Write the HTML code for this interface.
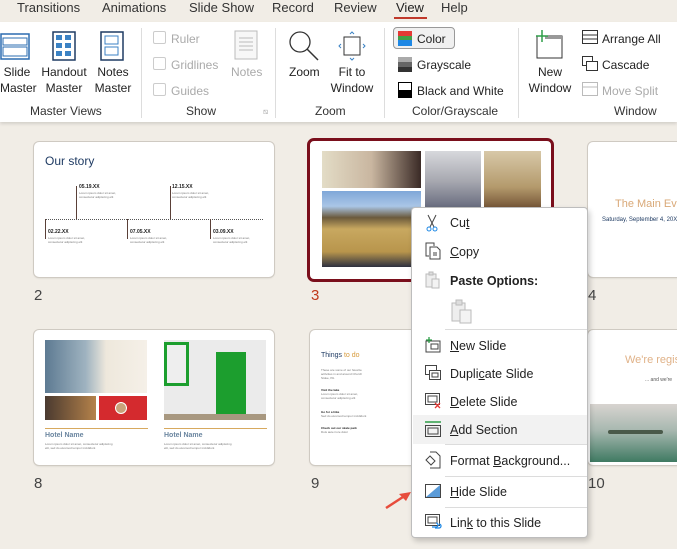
<!DOCTYPE html>
<html><head><meta charset="utf-8"><style>
*{margin:0;padding:0;box-sizing:border-box}
body{width:677px;height:549px;overflow:hidden;background:#f1ede6;font-family:"Liberation Sans",sans-serif;position:relative;color:#222}
.a{position:absolute}
.tab{top:0;font-size:13px;color:#333;}
.rib{top:22px;left:0;width:677px;height:100px;background:#fff;box-shadow:0 2px 3px rgba(0,0,0,.12)}
.gl{font-size:12px;color:#333;top:104px}
.sep{top:28px;width:1px;height:90px;background:#ddd}
.lbl{font-size:12px;color:#222;text-align:center;line-height:16px}
.dis{color:#aaa}
.slide{background:#fff;border-radius:5px;box-shadow:0 0 0 1px #cfcac2,0 1px 2px rgba(0,0,0,.15);overflow:hidden}
.num{font-size:15px;color:#444}
.menu{left:411px;top:207px;width:177px;height:331px;background:#fff;border:1px solid #bdbdbd;border-radius:4px;box-shadow:2px 3px 6px rgba(0,0,0,.2)}
.mi{position:absolute;left:38px;font-size:12.5px;color:#222}
.ms{position:absolute;left:33px;right:0;height:1px;background:#dcdcdc}
u{text-decoration:underline}
.ic{position:absolute;left:13px}
.tiny{font-size:3px;color:#777;line-height:4px}
</style></head><body>
<div class="a tab" style="left:17px">Transitions</div>
<div class="a tab" style="left:102px">Animations</div>
<div class="a tab" style="left:189px">Slide Show</div>
<div class="a tab" style="left:272px">Record</div>
<div class="a tab" style="left:334px">Review</div>
<div class="a tab" style="left:396px;color:#222">View</div>
<div class="a" style="left:394px;top:17px;width:33px;height:2px;background:#c0392b"></div>
<div class="a tab" style="left:441px">Help</div>
<div class="a rib"></div>
<svg class="a" style="left:0;top:33px" width="30" height="28"><rect x="1" y="1" width="28" height="25" fill="#fff" stroke="#2b6cb0" stroke-width="1.5"/><rect x="3" y="5" width="24" height="7" fill="none" stroke="#2b6cb0"/><rect x="3" y="14" width="24" height="9" fill="none" stroke="#2b6cb0"/></svg>
<div class="a lbl" style="left:0;top:64px;width:34px">Slide<br>Master</div>
<svg class="a" style="left:52px;top:31px" width="26" height="32"><rect x="1" y="1" width="22" height="28" fill="#fff" stroke="#1f3b63" stroke-width="1.5"/><g fill="#3b82c4"><rect x="4" y="4" width="6" height="5"/><rect x="13" y="4" width="6" height="5"/><rect x="4" y="12" width="6" height="5"/><rect x="13" y="12" width="6" height="5"/><rect x="4" y="20" width="6" height="5"/><rect x="13" y="20" width="6" height="5"/></g></svg>
<div class="a lbl" style="left:36px;top:64px;width:56px">Handout<br>Master</div>
<svg class="a" style="left:100px;top:31px" width="26" height="32"><rect x="1" y="1" width="22" height="28" fill="#fff" stroke="#1f3b63" stroke-width="1.5"/><rect x="5" y="5" width="13" height="8" fill="none" stroke="#3b82c4"/><rect x="5" y="16" width="13" height="8" fill="none" stroke="#3b82c4"/></svg>
<div class="a lbl" style="left:92px;top:64px;width:42px">Notes<br>Master</div>
<div class="a gl" style="left:30px">Master Views</div>
<div class="a sep" style="left:141px"></div>
<div class="a" style="left:153px;top:31px;width:13px;height:13px;border:1px solid #ccc;border-radius:2px"></div>
<div class="a lbl dis" style="left:171px;top:31px">Ruler</div>
<div class="a" style="left:153px;top:57px;width:13px;height:13px;border:1px solid #ccc;border-radius:2px"></div>
<div class="a lbl dis" style="left:171px;top:57px">Gridlines</div>
<div class="a" style="left:153px;top:83px;width:13px;height:13px;border:1px solid #ccc;border-radius:2px"></div>
<div class="a lbl dis" style="left:171px;top:83px">Guides</div>
<svg class="a" style="left:234px;top:30px" width="26" height="32"><rect x="1" y="1" width="22" height="28" fill="#f7f7f7" stroke="#bbb"/><g stroke="#bbb"><line x1="5" y1="8" x2="19" y2="8"/><line x1="5" y1="12" x2="19" y2="12"/><line x1="5" y1="16" x2="19" y2="16"/><line x1="5" y1="20" x2="19" y2="20"/></g></svg>
<div class="a lbl dis" style="left:231px;top:64px">Notes</div>
<div class="a gl" style="left:186px">Show</div>
<div class="a" style="left:263px;top:107px;font-size:8px;color:#aaa">⧅</div>
<div class="a sep" style="left:275px"></div>
<svg class="a" style="left:287px;top:29px" width="34" height="34"><circle cx="13" cy="13" r="10" fill="none" stroke="#333" stroke-width="1.3"/><line x1="20" y1="20" x2="31" y2="31" stroke="#333" stroke-width="1.5"/></svg>
<div class="a lbl" style="left:289px;top:64px">Zoom</div>
<svg class="a" style="left:336px;top:31px" width="32" height="30"><rect x="8" y="6" width="16" height="18" fill="#fff" stroke="#333"/><g fill="none" stroke="#3b82c4"><path d="M14 3l2-2 2 2M14 27l2 2 2-2M5 13l-2 2 2 2M27 13l2 2-2 2"/></g></svg>
<div class="a lbl" style="left:330px;top:64px;width:44px">Fit to<br>Window</div>
<div class="a gl" style="left:315px">Zoom</div>
<div class="a sep" style="left:384px"></div>
<div class="a" style="left:393px;top:27px;width:62px;height:22px;border:1px solid #999;border-radius:4px;background:#f0f0f0"></div>
<svg class="a" style="left:398px;top:31px" width="14" height="15"><rect y="0" width="14" height="5" fill="#e53935"/><rect y="5" width="14" height="4" fill="#43a047"/><rect y="9" width="14" height="6" fill="#1e88e5"/></svg>
<div class="a lbl" style="left:417px;top:31px">Color</div>
<svg class="a" style="left:398px;top:57px" width="14" height="15"><rect width="14" height="5" fill="#aaa"/><rect y="5" width="14" height="5" fill="#666"/><rect y="10" width="14" height="5" fill="#333"/></svg>
<div class="a lbl" style="left:417px;top:57px">Grayscale</div>
<svg class="a" style="left:398px;top:82px" width="14" height="16"><rect x=".5" y=".5" width="13" height="15" fill="#fff" stroke="#000"/><rect y="8" width="14" height="8" fill="#000"/></svg>
<div class="a lbl" style="left:417px;top:83px">Black and White</div>
<div class="a gl" style="left:412px">Color/Grayscale</div>
<div class="a sep" style="left:518px"></div>
<svg class="a" style="left:533px;top:30px" width="34" height="32"><rect x="4" y="6" width="25" height="22" fill="#fff" stroke="#333"/><rect x="12" y="6" width="17" height="3" fill="#999"/><path d="M9 0v12M3 6h12" stroke="#2e9e48" stroke-width="1.5"/></svg>
<div class="a lbl" style="left:526px;top:64px;width:48px">New<br>Window</div>
<svg class="a" style="left:582px;top:30px" width="16" height="14"><rect x=".5" y=".5" width="15" height="13" fill="#fff" stroke="#333"/><line x1="0" y1="5" x2="16" y2="5" stroke="#333"/><line x1="0" y1="9" x2="16" y2="9" stroke="#333"/></svg>
<div class="a lbl" style="left:602px;top:31px">Arrange All</div>
<svg class="a" style="left:582px;top:56px" width="16" height="15"><rect x=".5" y=".5" width="10" height="9" fill="#fff" stroke="#333"/><rect x="4.5" y="5.5" width="11" height="9" fill="#fff" stroke="#333"/></svg>
<div class="a lbl" style="left:602px;top:57px">Cascade</div>
<svg class="a" style="left:582px;top:82px" width="16" height="15"><rect x=".5" y=".5" width="15" height="13" fill="none" stroke="#bbb"/><line x1="0" y1="5" x2="16" y2="5" stroke="#bbb"/></svg>
<div class="a lbl dis" style="left:602px;top:83px">Move Split</div>
<div class="a gl" style="left:614px">Window</div>

<div class="a slide" style="left:34px;top:142px;width:240px;height:135px">
 <div class="a" style="left:11px;top:12px;font-size:12px;color:#1f3b63;font-family:'Liberation Sans Narrow','Liberation Sans',sans-serif">Our story</div>
 <div class="a" style="left:11px;top:77px;width:218px;border-top:1px dotted #555"></div>
 <div class="a" style="left:11px;top:77px;width:1px;height:20px;background:#5a4038"></div>
 <div class="a" style="left:42px;top:44px;width:1px;height:33px;background:#5a4038"></div>
 <div class="a" style="left:93px;top:77px;width:1px;height:20px;background:#5a4038"></div>
 <div class="a" style="left:136px;top:44px;width:1px;height:33px;background:#5a4038"></div>
 <div class="a" style="left:176px;top:77px;width:1px;height:20px;background:#5a4038"></div>
 <div class="a" style="left:45px;top:42px;font-size:5px;font-weight:bold">05.19.XX</div><div class="a tiny" style="left:45px;top:49px">Lorem ipsum dolor sit amet,<br>consectetur adipiscing elit</div>
 <div class="a" style="left:138px;top:42px;font-size:5px;font-weight:bold">12.15.XX</div><div class="a tiny" style="left:138px;top:49px">Lorem ipsum dolor sit amet,<br>consectetur adipiscing elit</div>
 <div class="a" style="left:14px;top:87px;font-size:5px;font-weight:bold">02.22.XX</div><div class="a tiny" style="left:14px;top:94px">Lorem ipsum dolor sit amet,<br>consectetur adipiscing elit</div>
 <div class="a" style="left:96px;top:87px;font-size:5px;font-weight:bold">07.05.XX</div><div class="a tiny" style="left:96px;top:94px">Lorem ipsum dolor sit amet,<br>consectetur adipiscing elit</div>
 <div class="a" style="left:179px;top:87px;font-size:5px;font-weight:bold">03.09.XX</div><div class="a tiny" style="left:179px;top:94px">Lorem ipsum dolor sit amet,<br>consectetur adipiscing elit</div>
</div>
<div class="a num" style="left:34px;top:287px">2</div>
<div class="a" style="left:307px;top:138px;width:247px;height:144px;border:3px solid #7a0f1c;border-radius:7px;background:#fff">
 <div class="a" style="left:12px;top:10px;width:99px;height:37px;background:linear-gradient(90deg,#e3dcc6,#c9b6a0 50%,#3a2a26)"></div>
 <div class="a" style="left:12px;top:50px;width:99px;height:76px;background:linear-gradient(180deg,#7fa7d8 0,#aac6e6 20%,#6b5a3c 35%,#c8a860 50%,#b8954c 80%,#2d3040)"></div>
 <div class="a" style="left:115px;top:10px;width:56px;height:60px;background:linear-gradient(180deg,#d7d8dc,#a7a8b0 50%,#606478)"></div>
 <div class="a" style="left:174px;top:10px;width:57px;height:60px;background:linear-gradient(180deg,#d8c8a8,#b49a6c 60%,#6a4a2e)"></div>
</div>
<div class="a num" style="left:311px;top:287px;color:#c0391b">3</div>
<div class="a slide" style="left:588px;top:142px;width:100px;height:135px">
 <div class="a" style="left:27px;top:56px;font-size:11px;color:#d9a877;white-space:nowrap">The Main Event</div>
 <div class="a" style="left:14px;top:75px;font-size:6px;color:#1f3b63;white-space:nowrap">Saturday, September 4, 20XX at</div>
</div>
<div class="a num" style="left:588px;top:287px">4</div>
<div class="a slide" style="left:34px;top:330px;width:240px;height:135px">
 <div class="a" style="left:11px;top:10px;width:102px;height:53px;background:linear-gradient(90deg,#5d7a92,#9fb3c0 40%,#eee8dc 60%,#f5f0e8)"></div>
 <div class="a" style="left:11px;top:66px;width:51px;height:24px;background:linear-gradient(90deg,#4a3a30,#b5824a)"></div>
 <div class="a" style="left:65px;top:66px;width:48px;height:24px;background:#d42a2e"><div class="a" style="left:16px;top:6px;width:12px;height:12px;border-radius:50%;background:#c9a27a;border:1px solid #fff"></div></div>
 <div class="a" style="left:130px;top:10px;width:102px;height:80px;background:#ebebeb"><div class="a" style="left:52px;top:12px;width:30px;height:62px;background:#1c9e2e"></div><div class="a" style="left:0;top:2px;width:25px;height:44px;border:3px solid #1c9e2e;background:#eee"></div><div class="a" style="left:0;top:74px;width:102px;height:6px;background:#a89880"></div></div>
 <div class="a" style="left:11px;top:98px;width:103px;height:1px;background:#d7a95e"></div>
 <div class="a" style="left:130px;top:98px;width:103px;height:1px;background:#d7a95e"></div>
 <div class="a" style="left:11px;top:102px;font-size:7px;font-weight:bold;color:#6b86a0">Hotel Name</div>
 <div class="a" style="left:130px;top:102px;font-size:7px;font-weight:bold;color:#6b86a0">Hotel Name</div>
 <div class="a tiny" style="left:11px;top:112px">Lorem ipsum dolor sit amet, consectetur adipiscing<br>elit, sed do eiusmod tempor incididunt</div>
 <div class="a tiny" style="left:130px;top:112px">Lorem ipsum dolor sit amet, consectetur adipiscing<br>elit, sed do eiusmod tempor incididunt</div>
</div>
<div class="a num" style="left:34px;top:475px">8</div>
<div class="a slide" style="left:310px;top:330px;width:110px;height:135px">
 <div class="a" style="left:11px;top:22px;font-size:7px;color:#1f3b63">Things <span style="color:#d79a3a">to do</span></div>
 <div class="a tiny" style="left:11px;top:38px">These are some of our favorite<br>activities in and around Church<br>Stoke, PA.</div>
 <div class="a tiny" style="left:11px;top:58px"><b style="color:#222">Visit the lake</b><br>Lorem ipsum dolor sit amet,<br>consectetur adipiscing elit</div>
 <div class="a tiny" style="left:11px;top:80px"><b style="color:#222">Go for a hike</b><br>Sed do eiusmod tempor incididunt</div>
 <div class="a tiny" style="left:11px;top:96px"><b style="color:#222">Check out our skate park</b><br>Duis aute irure dolor</div>
</div>
<div class="a num" style="left:311px;top:475px">9</div>
<div class="a slide" style="left:588px;top:330px;width:100px;height:135px">
 <div class="a" style="left:37px;top:24px;font-size:11px;color:#e0b288;white-space:nowrap">We're registered</div>
 <div class="a" style="left:57px;top:47px;font-size:5px;color:#555;white-space:nowrap">... and we're</div>
 <div class="a" style="left:2px;top:74px;width:98px;height:58px;background:linear-gradient(180deg,#d8d4d0,#a8b8b0 45%,#3f7a62)"><div class="a" style="left:18px;top:26px;width:55px;height:4px;background:#4a5a4a;border-radius:2px"></div></div>
</div>
<div class="a num" style="left:588px;top:475px">10</div>

<svg class="a" style="left:384px;top:488px" width="30" height="22"><path d="M2 20L22 7" stroke="#e74c3c" stroke-width="2.5"/><path d="M27 4L15 6 22 13Z" fill="#e74c3c"/></svg>

<div class="a menu">
 <svg class="ic" style="top:6px" width="14" height="18"><path d="M3 1l6 12M11 1L5 13" stroke="#444" fill="none"/><circle cx="4" cy="15" r="2" fill="none" stroke="#1e88e5"/><circle cx="10" cy="15" r="2" fill="none" stroke="#1e88e5"/></svg>
 <div class="mi" style="top:8px">Cu<u>t</u></div>
 <svg class="ic" style="top:34px" width="16" height="18"><path d="M4 14H1V1h8v3" fill="none" stroke="#444"/><path d="M5 5h7l3 3v9H5z" fill="#fff" stroke="#444"/><path d="M8 11h4M8 13h4" stroke="#444"/></svg>
 <div class="mi" style="top:37px"><u>C</u>opy</div>
 <svg class="ic" style="top:63px" width="16" height="18"><rect x="1" y="3" width="10" height="13" fill="#eee" stroke="#bbb"/><rect x="4" y="1" width="4" height="3" fill="#ddd" stroke="#bbb"/><rect x="7" y="8" width="7" height="9" fill="#f3f3f3" stroke="#bbb"/></svg>
 <div class="mi" style="top:66px;font-weight:bold">Paste Options:</div>
 <svg class="a" style="left:39px;top:91px" width="22" height="26"><rect x="1" y="4" width="13" height="18" fill="#eee" stroke="#bbb"/><rect x="5" y="1" width="6" height="5" fill="#ddd" stroke="#bbb"/><rect x="9" y="11" width="11" height="13" fill="#f3f3f3" stroke="#bbb"/></svg>
 <div class="ms" style="top:121px"></div>
 <svg class="ic" style="top:129px" width="16" height="16"><rect x="1" y="4" width="14" height="11" fill="#fff" stroke="#444"/><rect x="6" y="7" width="7" height="5" fill="none" stroke="#444"/><path d="M4 0v6M1 3h6" stroke="#2e9e48" stroke-width="1.3"/></svg>
 <div class="mi" style="top:131px"><u>N</u>ew Slide</div>
 <svg class="ic" style="top:157px" width="16" height="16"><rect x=".5" y=".5" width="11" height="9" fill="#fff" stroke="#444"/><rect x="4.5" y="5.5" width="11" height="9" fill="#fff" stroke="#444"/><rect x="7" y="8" width="6" height="4" fill="none" stroke="#444"/></svg>
 <div class="mi" style="top:159px">Dupli<u>c</u>ate Slide</div>
 <svg class="ic" style="top:185px" width="17" height="16"><rect x=".5" y=".5" width="14" height="11" fill="#fff" stroke="#444"/><rect x="3" y="3" width="9" height="6" fill="none" stroke="#444"/><path d="M10 10l5 5M15 10l-5 5" stroke="#e53935" stroke-width="1.3"/></svg>
 <div class="mi" style="top:187px"><u>D</u>elete Slide</div>
 <div class="a" style="left:1px;top:207px;width:174px;height:29px;background:#f2f2f2"></div>
 <svg class="ic" style="top:213px" width="16" height="16"><line x1="0" y1="1" x2="16" y2="1" stroke="#2e9e48" stroke-width="1.5"/><rect x=".5" y="4.5" width="15" height="11" fill="none" stroke="#444"/><rect x="3" y="7" width="10" height="6" fill="none" stroke="#444"/></svg>
 <div class="mi" style="top:215px"><u>A</u>dd Section</div>
 <div class="ms" style="top:236px"></div>
 <svg class="ic" style="top:243px" width="16" height="18"><path d="M5 1h6l4 4v12H5" fill="none" stroke="#444"/><path d="M1 9l4-4 5 5-4 4z" fill="#fff" stroke="#444"/></svg>
 <div class="mi" style="top:246px">Format <u>B</u>ackground...</div>
 <div class="ms" style="top:268px"></div>
 <svg class="ic" style="top:276px" width="16" height="14"><rect x=".5" y=".5" width="15" height="13" fill="#fff" stroke="#444"/><path d="M15 1L1 13h14z" fill="#5a9bd8"/></svg>
 <div class="mi" style="top:277px"><u>H</u>ide Slide</div>
 <div class="ms" style="top:299px"></div>
 <svg class="ic" style="top:306px" width="17" height="17"><rect x=".5" y=".5" width="14" height="11" fill="#fff" stroke="#444"/><rect x="3" y="3" width="9" height="6" fill="none" stroke="#444"/><path d="M7 13h4a2 2 0 0 0 0-4M10 14h4a2 2 0 0 0 0-4" fill="none" stroke="#1e88e5" stroke-width="1.3"/></svg>
 <div class="mi" style="top:308px">Lin<u>k</u> to this Slide</div>
</div>
</body></html>
